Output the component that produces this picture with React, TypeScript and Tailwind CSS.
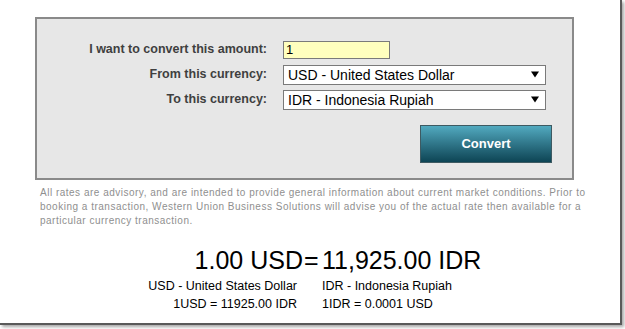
import React from "react";

const font = { fontFamily: '"Liberation Sans", Arial, sans-serif' };

function Caret() {
  return (
    <svg width="8" height="7" viewBox="0 0 8 7" className="block">
      <path d="M0 0.5 L8 0.5 L4 6.5 Z" fill="#000" />
    </svg>
  );
}

function SelectBox({ value }: { value: string }) {
  return (
    <div className="flex h-[20px] w-[263px] items-center justify-between border border-[#7a7a7a] bg-white pl-[4px] pr-[6px] text-[14px] leading-none text-black">
      <span>{value}</span>
      <Caret />
    </div>
  );
}

export default function App() {
  return (
    <div className="h-[329px] w-[625px] overflow-hidden bg-white" style={font}>
      <div className="h-[325px] w-[622px] border-b-2 border-r-2 border-[#5a5a5a] bg-white shadow-[2px_2px_3px_rgba(0,0,0,0.35)]">
        <div className="flex flex-col pt-[17px]">
          {/* Form panel */}
          <div className="ml-[35px] h-[163px] w-[539px] border-2 border-[#8a8a8a] bg-[#e7e7e7]">
            <div className="grid grid-cols-[230px_auto] gap-x-[16px] pt-[18px]">
              <div className="flex h-[25px] items-center justify-end text-[12.5px] font-bold text-[#3f3f3f]">
                I want to convert this amount:
              </div>
              <div className="flex h-[25px] items-center">
                <div className="flex h-[18px] w-[107px] items-center border border-[#7a7a7a] bg-[#ffffbe] pl-[2px] text-[13px] leading-none text-black">
                  1
                </div>
              </div>
              <div className="flex h-[25px] items-center justify-end text-[12.5px] font-bold text-[#3f3f3f]">
                From this currency:
              </div>
              <div className="flex h-[25px] items-center">
                <SelectBox value="USD - United States Dollar" />
              </div>
              <div className="flex h-[25px] items-center justify-end text-[12.5px] font-bold text-[#3f3f3f]">
                To this currency:
              </div>
              <div className="flex h-[25px] items-center">
                <SelectBox value="IDR - Indonesia Rupiah" />
              </div>
            </div>
            <div className="mt-[13px] flex justify-end pr-[20px]">
              <button className="flex h-[38px] w-[132px] items-center justify-center border border-[#3e5a62] bg-gradient-to-b from-[#52aac0] to-[#0d4555] text-[13px] font-bold text-white">
                Convert
              </button>
            </div>
          </div>

          {/* Disclaimer */}
          <div className="ml-[40px] mt-[6px] whitespace-nowrap text-[10px] leading-[14px] tracking-[0.5px] text-[#8f8f8f]">
            All rates are advisory, and are intended to provide general information about current market conditions. Prior to
            <br />
            booking a transaction, Western Union Business Solutions will advise you of the actual rate then available for a
            <br />
            particular currency transaction.
          </div>

          {/* Result */}
          <div className="mt-[18px] flex h-[28px] items-center text-[25px] leading-[28px] text-black">
            <div className="w-[303px] text-right">1.00 USD</div>
            <div className="w-[19px] pl-[1px]">=</div>
            <div>11,925.00 IDR</div>
          </div>
          <div className="mt-[3px] grid grid-cols-[297px_auto] gap-x-[25px] text-[12.5px] leading-[18px] text-black">
            <div className="text-right">USD - United States Dollar</div>
            <div>IDR - Indonesia Rupiah</div>
            <div className="text-right">1USD = 11925.00 IDR</div>
            <div>1IDR = 0.0001 USD</div>
          </div>
        </div>
      </div>
    </div>
  );
}
